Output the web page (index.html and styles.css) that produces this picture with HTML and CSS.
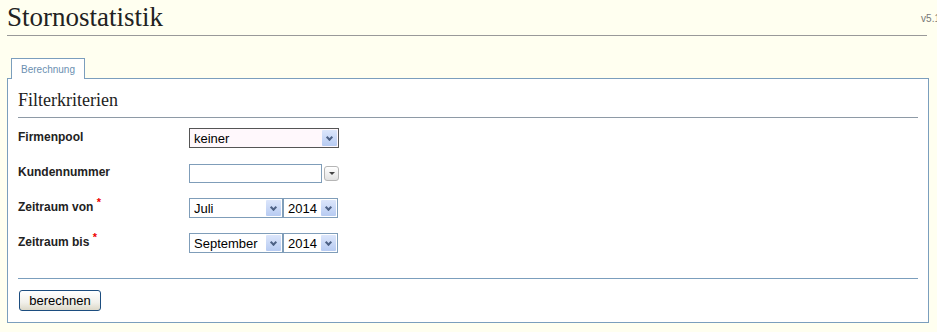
FILE: index.html
```html
<!DOCTYPE html>
<html lang="de">
<head>
    <meta charset="UTF-8">
    <title>Stornostatistik</title>
    <link rel="stylesheet" href="styles.css">
</head>
<body>
    <div class="header">
        <h1>Stornostatistik</h1>
        <span class="version">v5.1</span>
    </div>

    <div class="tabs">
        <span class="tab">Berechnung</span>
    </div>

    <div class="panel">
        <h2>Filterkriterien</h2>

        <form class="filter" onsubmit="return false">
            <div class="row">
                <label class="label">Firmenpool</label>
                <span class="select select-pool">
                    <select>
                        <option>keiner</option>
                    </select>
                    <span class="arrow"></span>
                </span>
            </div>

            <div class="row">
                <label class="label">Kundennummer</label>
                <input type="text" class="text-input">
                <button type="button" class="drop-btn"><span class="tri"></span></button>
            </div>

            <div class="row">
                <label class="label">Zeitraum von <span class="req">*</span></label>
                <span class="select select-month">
                    <select>
                        <option>Juli</option>
                    </select>
                    <span class="arrow"></span>
                </span>
                <span class="select select-year">
                    <select>
                        <option>2014</option>
                    </select>
                    <span class="arrow"></span>
                </span>
            </div>

            <div class="row">
                <label class="label">Zeitraum bis <span class="req">*</span></label>
                <span class="select select-month">
                    <select>
                        <option>September</option>
                    </select>
                    <span class="arrow"></span>
                </span>
                <span class="select select-year">
                    <select>
                        <option>2014</option>
                    </select>
                    <span class="arrow"></span>
                </span>
            </div>

            <div class="actions">
                <button type="submit" class="btn">berechnen</button>
            </div>
        </form>
    </div>
</body>
</html>
```

FILE: styles.css
```css
html, body {
    overflow: hidden;
}

body {
    margin: 0;
    padding: 0 9px 0 7px;
    background: #fffff0;
    font-family: 'Liberation Sans', Arial, sans-serif;
    color: #222;
}

.header {
    display: flex;
    justify-content: space-between;
    align-items: flex-start;
    border-bottom: 1px solid #999;
    height: 35px;
    width: 920px;
}

h1 {
    margin: 0;
    padding-top: 2px;
    font-family: 'Liberation Serif', 'DejaVu Serif', serif;
    font-weight: normal;
    font-size: 27px;
    line-height: 30px;
    color: #222;
}

.version {
    margin-top: 13px;
    margin-right: -13px;
    font-size: 10px;
    color: #777;
}

.tabs {
    display: flex;
    padding-left: 4px;
    margin-top: 21px;
}

.tab {
    display: block;
    width: 72px;
    height: 20px;
    border: 1px solid #7b9ebd;
    border-bottom: none;
    background: #fff;
    color: #6b8fb1;
    font-size: 10px;
    line-height: 21px;
    text-align: center;
    position: relative;
    top: 1px;
}

.panel {
    width: 900px;
    border: 1px solid #7b9ebd;
    background: #fff;
    padding: 0 10px 11px 10px;
}

h2 {
    margin: 0;
    padding-top: 11px;
    height: 27px;
    border-bottom: 1px solid #8e9aa6;
    font-family: 'Liberation Serif', 'DejaVu Serif', serif;
    font-weight: normal;
    font-size: 18px;
    line-height: 20px;
    color: #222;
}

.filter {
    margin: 0;
    padding-top: 10px;
}

.row {
    display: flex;
    align-items: center;
    height: 20px;
    margin-bottom: 15px;
}

.label {
    width: 171px;
    flex-shrink: 0;
    font-size: 12px;
    font-weight: bold;
    color: #222;
    position: relative;
    top: -1px;
}

.req {
    color: #e00;
    font-size: 11px;
    position: relative;
    top: -5px;
}

.select {
    position: relative;
    display: inline-block;
    height: 20px;
}

.select select {
    appearance: none;
    -webkit-appearance: none;
    box-sizing: border-box;
    height: 20px;
    margin: 0;
    padding: 0 0 0 4px;
    border: 1px solid #7f9db9;
    border-radius: 0;
    background: #fff;
    font-family: 'Liberation Sans', Arial, sans-serif;
    font-size: 13px;
    color: #000;
    width: 100%;
}

.select .arrow {
    position: absolute;
    top: 2px;
    right: 2px;
    width: 15px;
    height: 16px;
    background: linear-gradient(#dce6fb, #b7cbf2);
    border-radius: 1px;
    pointer-events: none;
}

.select .arrow::after {
    content: "";
    position: absolute;
    left: 5px;
    top: 5px;
    width: 3px;
    height: 3px;
    border-right: 2px solid #4d6185;
    border-bottom: 2px solid #4d6185;
    transform: rotate(45deg);
}

.select-pool {
    width: 150px;
}

.select-pool select {
    border-color: #555;
    background: #fff8fc;
}

.select-month {
    width: 94px;
}

.select-year {
    width: 55px;
    margin-left: 0;
}

.text-input {
    box-sizing: border-box;
    width: 133px;
    height: 19px;
    margin: 0;
    border: 1px solid #7f9db9;
    padding: 0 3px;
    font-size: 13px;
}

.drop-btn {
    box-sizing: border-box;
    width: 15px;
    height: 15px;
    margin-left: 2px;
    padding: 0;
    border: 1px solid #b5b5b5;
    border-radius: 3px;
    background: linear-gradient(#fff, #e2e2e2);
    position: relative;
}

.tri {
    position: absolute;
    left: 4px;
    top: 5px;
    border-left: 3px solid transparent;
    border-right: 3px solid transparent;
    border-top: 3px solid #444;
}

.actions {
    border-top: 1px solid #7b9ebd;
    margin-top: 25px;
    padding-top: 11px;
}

.btn {
    box-sizing: border-box;
    width: 82px;
    height: 21px;
    margin-left: 1px;
    padding: 0;
    border: 1px solid #1c4d7f;
    border-radius: 3px;
    background: linear-gradient(#ffffff, #f1f0ea 60%, #dcd8c8);
    font-family: 'Liberation Sans', Arial, sans-serif;
    font-size: 13px;
    color: #000;
}
```
